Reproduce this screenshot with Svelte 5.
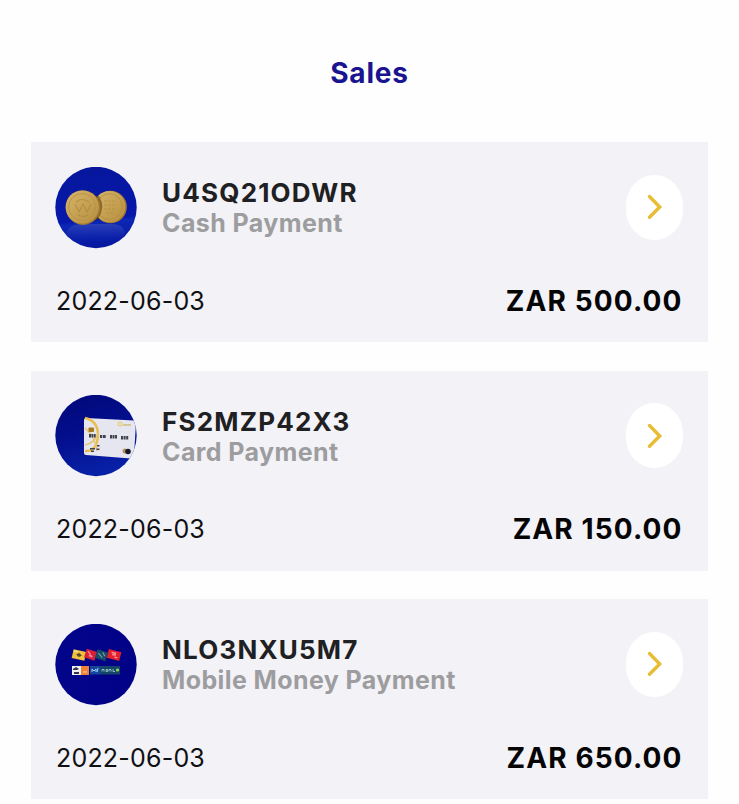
<script>
  const sales = [
    { code: 'U4SQ21ODWR', method: 'Cash Payment', kind: 'cash', date: '2022-06-03', amount: 'ZAR 500.00' },
    { code: 'FS2MZP42X3', method: 'Card Payment', kind: 'card', date: '2022-06-03', amount: 'ZAR 150.00' },
    { code: 'NLO3NXU5M7', method: 'Mobile Money Payment', kind: 'mobile', date: '2022-06-03', amount: 'ZAR 650.00' }
  ];
</script>

<main>
  <h1>Sales</h1>
  <div class="list">
    {#each sales as sale}
      <article>
        <div class="top">
          <svg class="avatar" viewBox="0 0 82 82" aria-hidden="true">
            <defs>
              <clipPath id="clip-{sale.kind}"><circle cx="41" cy="40.5" r="40.7" /></clipPath>
              <linearGradient id="bg-cash" x1="0" y1="0" x2="0.1" y2="1">
                <stop offset="0" stop-color="#06169b" /><stop offset="0.68" stop-color="#0618ac" /><stop offset="0.72" stop-color="#0b27b4" /><stop offset="1" stop-color="#0718a0" />
              </linearGradient>
              <linearGradient id="bg-card" x1="0" y1="0" x2="0.3" y2="1">
                <stop offset="0" stop-color="#020879" /><stop offset="0.5" stop-color="#030e8c" /><stop offset="1" stop-color="#0820a6" />
              </linearGradient>
              <linearGradient id="bg-mobile"><stop offset="0" stop-color="#02048a" /><stop offset="1" stop-color="#010286" /></linearGradient>
              <linearGradient id="gold" x1="0" y1="0" x2="1" y2="1"><stop offset="0" stop-color="#d5b56a" /><stop offset="1" stop-color="#b88f3d" /></linearGradient>
              <linearGradient id="reflection" x1="0" y1="0" x2="0" y2="1"><stop offset="0" stop-color="#3a4cb8" stop-opacity=".7" /><stop offset="1" stop-color="#2038b8" stop-opacity="0" /></linearGradient>
            </defs>
            <g clip-path="url(#clip-{sale.kind})">
              <rect width="82" height="82" fill="url(#bg-{sale.kind})" />
              {#if sale.kind === 'cash'}
                <path d="M11 68q2-11 16-11h30q12 0 13 10l-8 7H18z" fill="url(#reflection)" />
                <circle cx="55.5" cy="40" r="16.3" fill="#a77b2e" />
                <circle cx="54.5" cy="39.6" r="15.7" fill="url(#gold)" />
                <circle cx="54.5" cy="39.6" r="12.8" fill="none" stroke="#b18b43" stroke-width=".8" />
                <path d="M49 34h12M49 38h12M49 42h11M51 46h8" stroke="#a78037" stroke-width="1" stroke-dasharray="3 1" opacity=".45" />
                <path d="M44 29q7 11-1 23l-4 2V29z" fill="#654817" opacity=".65" />
                <circle cx="28" cy="40.7" r="17.2" fill="#a77b2e" />
                <circle cx="27.2" cy="40" r="16.6" fill="url(#gold)" />
                <circle cx="27.2" cy="40" r="13.5" fill="none" stroke="#b8934d" stroke-width="1" />
                <path d="M20 37l4 8 4-8 4 8 4-8M21 35q6-5 13 0M23 48q5 3 10 0" fill="none" stroke="#ad883f" stroke-width="1.2" opacity=".75" />
              {:else if sale.kind === 'card'}
                <path d="M29 25q0-2 2-2l48 2.5q2 0 2 2l-2 33q0 3-3 3l-45-3.5q-2 0-2-2z" fill="#e5e6f0" />
                <path d="M30 23q13 3 13 17-1 17-13 16" fill="none" stroke="#e8be4d" stroke-width="2.5" />
                <path d="M30 33q10 8 12 23M30 50q10-2 13-12" fill="none" stroke="#e6c779" stroke-width="1.6" />
                <rect x="33.5" y="32.5" width="5.5" height="4.5" rx="1" fill="#a9791c" />
                <g fill="#41434f">
                  <rect x="34" y="39" width="2" height="3.5" /><rect x="36.5" y="39" width="2" height="3.5" /><rect x="39" y="39" width="1.7" height="3.5" />
                  <rect x="45" y="40" width="2" height="3" /><rect x="47.7" y="40" width="3" height="3" />
                  <rect x="55" y="40" width="2" height="3.5" /><rect x="57.5" y="40" width="2" height="3.5" /><rect x="60" y="40" width="2" height="3.5" />
                  <rect x="66" y="41" width="2" height="3.5" /><rect x="68.6" y="41" width="2" height="3.5" /><rect x="71.2" y="41" width="2" height="3.5" />
                  <path d="M35 53h5v1.5h-5zM36 55.5h3v1.5h-3zM42 50h2.5v1.5H42zM41.5 53.5h3v1.5h-3z" />
                </g>
                <circle cx="65" cy="29" r="2" fill="none" stroke="#e7c250" stroke-width="1" />
                <path d="M68 30h8" stroke="#d5bb77" stroke-width="1.4" />
                <circle cx="70" cy="56" r="2.5" fill="#b7905b" /><circle cx="73" cy="56.5" r="2.8" fill="#17182a" />
              {:else}
                <g transform="rotate(13 24 31)"><rect x="17.5" y="26.5" width="13" height="9" fill="#f0bf3c" /><path d="M21 31l3-2 3 2-3 2z" fill="#574929" /><path d="M18 28h4" stroke="#fff4aa" /></g>
                <g transform="rotate(18 35 31)"><rect x="30" y="26" width="11" height="9" fill="#d52037" /><path d="M32 28l5 4M34 32h4" stroke="#ff8392" stroke-width="1.3" /></g>
                <g transform="rotate(18 46 31)"><rect x="41" y="26.5" width="11" height="9" fill="#184b68" /><path d="M43 30l5 3M47 28l3 3" stroke="#7b9caa" stroke-width="1.2" /></g>
                <g transform="rotate(15 59 31)"><rect x="52.5" y="26.5" width="13" height="9" fill="#df202f" /><path d="M56 29h4v2h-3M60 33h3" fill="none" stroke="#ff9b9a" stroke-width="1.3" /></g>
                <rect x="17" y="42" width="9" height="9" fill="#eee" /><path d="M18 45l3-2 3 2-2 1h-4zM19 48h5v2h-5z" fill="#343349" />
                <rect x="26" y="42" width="8" height="9" fill="#ef8236" /><path d="M28 48h4" stroke="#ffd0a6" />
                <rect x="35" y="42" width="10" height="8.5" fill="#1746a0" /><path d="M37 48v-3l2 2 2-2v3M42 48l1-4" fill="none" stroke="#9dd1ed" />
                <rect x="45" y="42" width="20" height="8.5" fill="#16456a" /><path d="M47 47.5v-2h2v2M51 45.5h1.5v2H51zM54 47.5v-2h2v2M58 45v2.5h2" fill="none" stroke="#a8d6d2" stroke-width=".8" /><circle cx="62.5" cy="46" r="1.6" fill="#9bd454" />
              {/if}
            </g>
          </svg>
          <div class="info">
            <h2>{sale.code}</h2>
            <p>{sale.method}</p>
          </div>
          <button aria-label="View sale">
            <svg viewBox="0 0 16 26" aria-hidden="true"><path d="M2.5 2.5l10.2 10.5L2.5 23.2" /></svg>
          </button>
        </div>
        <div class="bottom">
          <time>{sale.date}</time>
          <strong>{sale.amount}</strong>
        </div>
      </article>
    {/each}
  </div>
</main>

<style>
  :global(body) { margin: 0; background: #fefefe; }
  main {
    box-sizing: border-box;
    height: 804px;
    padding: 55px 31px 0;
    overflow: hidden;
    font-family: Inter, "Liberation Sans", sans-serif;
  }
  h1 { margin: 0; text-align: center; font-size: 28px; line-height: 36px; font-weight: 700; letter-spacing: 0.8px; color: #1b1491; }
  .list { display: flex; flex-direction: column; gap: 28.5px; margin-top: 51px; }
  article { box-sizing: border-box; height: 200px; flex: none; padding: 24.5px 25px 0 24px; background: #f2f2f7; }
  .top { display: flex; height: 82px; align-items: center; }
  .avatar { width: 82px; height: 82px; flex: none; }
  .info { flex: 1; margin-left: 25px; white-space: nowrap; padding-top: 1px; }
  h2, p { margin: 0; line-height: 30px; }
  h2 { font-size: 26px; font-weight: 650; letter-spacing: 1.2px; color: #202022; }
  p { font-size: 25px; font-weight: 680; letter-spacing: 0.4px; color: #9d9d9f; }
  button { display: flex; align-items: center; justify-content: center; width: 57px; height: 65px; margin-bottom: 1px; padding: 0; border: 0; border-radius: 28.5px / 30px; background: #fff; }
  button svg { width: 16px; height: 26px; fill: none; stroke: #e8bd35; stroke-width: 3.4; stroke-linecap: round; stroke-linejoin: miter; }
  .bottom { display: flex; justify-content: space-between; align-items: center; height: 36px; margin-top: 34px; padding: 0 0.5px 0 1px; }
  time { font-size: 25px; letter-spacing: 0.2px; color: #101012; }
  strong { font-size: 28px; font-weight: 650; letter-spacing: 1.1px; color: #050506; }
</style>
